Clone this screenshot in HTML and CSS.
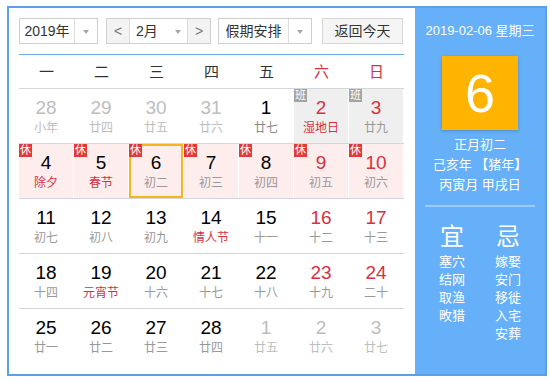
FILE: index.html
```html
<!DOCTYPE html>
<html>
<head>
  <meta charset="utf-8">
  <title>万年历</title>
  <link rel="stylesheet" href="styles.css">
</head>
<body>
  <div class="calendar">
    <div class="main">
      <div class="toolbar">
        <div class="select year"><span class="label">2019年</span><span class="arrow"></span></div>
        <div class="select month">
          <span class="step">&lt;</span>
          <span class="label">2月</span><span class="arrow plain"></span>
          <span class="step">&gt;</span>
        </div>
        <div class="select holiday"><span class="label">假期安排</span><span class="arrow"></span></div>
        <a href="#" class="today-btn">返回今天</a>
      </div>

      <div class="weekdays">
        <span>一</span><span>二</span><span>三</span><span>四</span><span>五</span>
        <span class="red">六</span><span class="red">日</span>
      </div>

      <div class="week">
        <div class="day other"><b>28</b><span>小年</span></div>
        <div class="day other"><b>29</b><span>廿四</span></div>
        <div class="day other"><b>30</b><span>廿五</span></div>
        <div class="day other"><b>31</b><span>廿六</span></div>
        <div class="day"><b>1</b><span class="dark">廿七</span></div>
        <div class="day work"><i class="tag">班</i><b class="red">2</b><span class="red">湿地日</span></div>
        <div class="day work"><i class="tag">班</i><b class="red">3</b><span>廿九</span></div>
      </div>
      <div class="week">
        <div class="day rest"><i class="tag">休</i><b>4</b><span class="red">除夕</span></div>
        <div class="day rest"><i class="tag">休</i><b>5</b><span class="red">春节</span></div>
        <div class="day rest today"><i class="tag">休</i><b>6</b><span>初二</span></div>
        <div class="day rest"><i class="tag">休</i><b>7</b><span>初三</span></div>
        <div class="day rest"><i class="tag">休</i><b>8</b><span>初四</span></div>
        <div class="day rest"><i class="tag">休</i><b class="red">9</b><span>初五</span></div>
        <div class="day rest"><i class="tag">休</i><b class="red">10</b><span>初六</span></div>
      </div>
      <div class="week">
        <div class="day"><b>11</b><span>初七</span></div>
        <div class="day"><b>12</b><span>初八</span></div>
        <div class="day"><b>13</b><span>初九</span></div>
        <div class="day"><b>14</b><span class="red">情人节</span></div>
        <div class="day"><b>15</b><span>十一</span></div>
        <div class="day"><b class="red">16</b><span>十二</span></div>
        <div class="day"><b class="red">17</b><span>十三</span></div>
      </div>
      <div class="week">
        <div class="day"><b>18</b><span>十四</span></div>
        <div class="day"><b>19</b><span class="red">元宵节</span></div>
        <div class="day"><b>20</b><span>十六</span></div>
        <div class="day"><b>21</b><span>十七</span></div>
        <div class="day"><b>22</b><span>十八</span></div>
        <div class="day"><b class="red">23</b><span>十九</span></div>
        <div class="day"><b class="red">24</b><span>二十</span></div>
      </div>
      <div class="week">
        <div class="day"><b>25</b><span>廿一</span></div>
        <div class="day"><b>26</b><span>廿二</span></div>
        <div class="day"><b>27</b><span>廿三</span></div>
        <div class="day"><b>28</b><span>廿四</span></div>
        <div class="day other"><b>1</b><span>廿五</span></div>
        <div class="day other"><b>2</b><span>廿六</span></div>
        <div class="day other"><b>3</b><span>廿七</span></div>
      </div>
    </div>

    <div class="side">
      <div class="date">2019-02-06 星期三</div>
      <div class="big-day">6</div>
      <div class="lunar">
        <div>正月初二</div>
        <div>己亥年 【猪年】</div>
        <div>丙寅月 甲戌日</div>
      </div>
      <div class="line"></div>
      <div class="almanac">
        <div class="col">
          <div class="head">宜</div>
          <div>塞穴</div><div>结网</div><div>取渔</div><div>畋猎</div>
        </div>
        <div class="col">
          <div class="head">忌</div>
          <div>嫁娶</div><div>安门</div><div>移徙</div><div>入宅</div><div>安葬</div>
        </div>
      </div>
    </div>
  </div>
</body>
</html>
```

FILE: styles.css
```css
body {
  margin: 0;
  background-color: #fff;
  font-family: "Liberation Sans", Arial, "Noto Sans CJK SC", sans-serif;
  color: #000;
}

.calendar {
  display: flex;
  width: 536px;
  height: 366px;
  margin: 6px 0 0 7px;
  border: 2px solid #5c9fe6;
}

.main {
  width: 385px;
  padding: 10px 11px 0 10px;
}

/* toolbar */
.toolbar {
  display: flex;
  height: 26px;
  padding-bottom: 10px;
  border-bottom: 1px solid #6aaee8;
  font-size: 14px;
  color: #333;
}

.select {
  display: flex;
  height: 24px;
  border: 1px solid #cfcfcf;
  background-color: #fff;
  line-height: 24px;
}

.select .label {
  flex: 1;
  text-align: center;
}

.select .arrow {
  position: relative;
  width: 22px;
  border-left: 1px solid #dcdcdc;
}

.select .arrow::after {
  content: "";
  position: absolute;
  left: 8px;
  top: 11px;
  border-top: 4px solid #a8a8a8;
  border-left: 3px solid transparent;
  border-right: 3px solid transparent;
}

.select .arrow.plain {
  width: 20px;
  border-left: none;
}

.year {
  width: 77px;
  margin-right: 8px;
}

.month {
  width: 103px;
  margin-right: 7px;
}

.month .label {
  padding-left: 6px;
  text-align: left;
}

.month .step {
  width: 22px;
  background-color: #f3f3f3;
  text-align: center;
  color: #777;
}

.month .step:first-child {
  border-right: 1px solid #dcdcdc;
}

.month .step:last-child {
  border-left: 1px solid #dcdcdc;
}

.holiday {
  width: 92px;
  margin-right: 10px;
}

.today-btn {
  display: block;
  width: 79px;
  height: 24px;
  line-height: 24px;
  border: 1px solid #d6d6d6;
  background-color: #f5f5f5;
  color: #333;
  text-align: center;
  text-decoration: none;
}

/* grid */
.weekdays,
.week {
  display: grid;
  grid-template-columns: repeat(7, 55px);
}

.weekdays {
  height: 33px;
  line-height: 33px;
  text-align: center;
  font-size: 15px;
  color: #333;
}

.week {
  height: 54px;
  border-top: 1px solid #d2d7dc;
}

.day {
  position: relative;
  padding-top: 8px;
  border-right: 1px solid #fff;
  text-align: center;
}

.day b {
  display: block;
  font-weight: normal;
  font-size: 19px;
  line-height: 22px;
}

.day span {
  display: block;
  margin-top: 1px;
  font-size: 12px;
  line-height: 16px;
  color: #999;
}

.day span.dark {
  color: #888;
}

.day.other b,
.day.other span {
  color: #bdbdbd;
}

.day.work {
  background-color: #efefef;
}

.day.rest {
  background-color: #fdeded;
}

.day.today {
  box-shadow: inset 0 0 0 2px #f8b419;
}

.tag {
  position: absolute;
  left: 0;
  top: 0;
  width: 13px;
  height: 13px;
  font-style: normal;
  font-size: 11px;
  line-height: 13px;
  color: #fff;
  background-color: #e23a3a;
}

.work .tag {
  background-color: #a3a3a3;
}

.red,
.day b.red,
.day span.red {
  color: #d8303f;
}

/* side panel */
.side {
  flex: 1;
  padding-top: 13px;
  background-color: #65b0f8;
  color: #fff;
  text-align: center;
  font-size: 13px;
}

.date {
  line-height: 20px;
}

.big-day {
  width: 76px;
  height: 74px;
  margin: 15px auto 0;
  background-color: #feb400;
  box-shadow: 0 1px 3px rgba(0, 0, 0, 0.2);
  font-size: 54px;
  line-height: 74px;
}

.lunar {
  margin-top: 5px;
  line-height: 20px;
}

.line {
  width: 110px;
  height: 2px;
  margin: 10px auto 0;
  background-color: #9ccbf8;
}

.almanac {
  display: flex;
  justify-content: center;
  margin-top: 15px;
  line-height: 18px;
}

.almanac .col {
  width: 56px;
}

.almanac .head {
  font-size: 24px;
  line-height: 30px;
  margin-bottom: 1px;
}
```
